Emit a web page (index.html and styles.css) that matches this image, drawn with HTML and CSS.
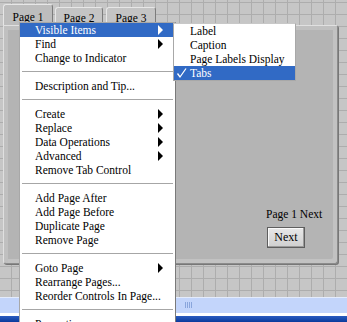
FILE: index.html
```html
<!DOCTYPE html>
<html>
<head>
<meta charset="utf-8">
<link rel="stylesheet" href="styles.css">
</head>
<body>
<div class="window">
  <div class="canvas">
    <div class="tabctl">
      <div class="tabs">
        <div class="tab tab-active">Page 1</div>
        <div class="tab">Page 2</div>
        <div class="tab tab-last">Page 3</div>
      </div>
      <div class="panel">
        <div class="pagelabel">Page 1 Next</div>
        <div class="btn">Next</div>
      </div>
    </div>
  </div>
  <div class="hscroll"><span class="grip"></span></div>
  <div class="gap"></div>
  <div class="taskbar"></div>

  <div class="menu">
    <div class="item sel">Visible Items<span class="arrow"></span></div>
    <div class="item">Find<span class="arrow"></span></div>
    <div class="item">Change to Indicator</div>
    <div class="sep"></div>
    <div class="item">Description and Tip...</div>
    <div class="sep"></div>
    <div class="item">Create<span class="arrow"></span></div>
    <div class="item">Replace<span class="arrow"></span></div>
    <div class="item">Data Operations<span class="arrow"></span></div>
    <div class="item">Advanced<span class="arrow"></span></div>
    <div class="item">Remove Tab Control</div>
    <div class="sep"></div>
    <div class="item">Add Page After</div>
    <div class="item">Add Page Before</div>
    <div class="item">Duplicate Page</div>
    <div class="item">Remove Page</div>
    <div class="sep"></div>
    <div class="item">Goto Page<span class="arrow"></span></div>
    <div class="item">Rearrange Pages...</div>
    <div class="item">Reorder Controls In Page...</div>
    <div class="sep"></div>
    <div class="item">Properties</div>
  </div>

  <div class="submenu">
    <div class="item">Label</div>
    <div class="item">Caption</div>
    <div class="item">Page Labels Display</div>
    <div class="item sel"><svg class="check" width="12" height="12" viewBox="0 0 12 12"><polyline points="1.5,6.5 4,10 10,1.5" fill="none" stroke="#fff" stroke-width="1.3"/></svg>Tabs</div>
  </div>
</div>
</body>
</html>
```
FILE: styles.css
```css
* { box-sizing: border-box; }
html, body { margin: 0; padding: 0; }
body {
  font-family: "Liberation Serif", "Times New Roman", serif;
  font-size: 11.5px;
  color: #000;
  background: #c5c5c5;
}
.window {
  position: relative;
  width: 347px;
  height: 322px;
  overflow: hidden;
  display: flex;
  flex-direction: column;
}
.canvas {
  position: relative;
  height: 297px;
  flex: none;
  background-color: #c6c6c6;
  background-image:
    linear-gradient(to right, #adadad 1px, transparent 1px),
    linear-gradient(to bottom, #adadad 1px, transparent 1px);
  background-size: 12px 12px;
  background-position: 11px 2px;
}
.tabctl {
  position: absolute;
  left: 3px;
  top: 4px;
  width: 335px;
  height: 260px;
  display: flex;
  flex-direction: column;
}
.tabs {
  display: flex;
  height: 21px;
  align-items: flex-end;
  gap: 2px;
}
.tab {
  height: 18px;
  padding: 2px 0 0;
  line-height: 16px;
  background: #c4c4c4;
  border-top: 1px solid #e6e6e6;
  border-left: 1px solid #e6e6e6;
  border-right: 1px solid #7c7c7c;
  border-radius: 3px 3px 0 0;
  width: 48px;
  text-align: center;
}
.tab-last { width: 50px; margin-left: 1px; }
.tab-active {
  height: 21px;
  width: 50px;
  padding-top: 4px;
  background: #bdbdbd;
}
.panel {
  position: relative;
  flex: 1;
  background: #b4b4b4;
  border: 1px solid #8c8c8c;
  border-top-color: #e0e0e0;
  border-left-color: #e0e0e0;
  border-radius: 0 2px 3px 3px;
  box-shadow: inset 4px 4px 0 #c0c0c0, inset -4px -4px 0 #c2c2c2, 1px 1px 0 #777;
}
.pagelabel {
  position: absolute;
  left: 262px;
  top: 182px;
  white-space: nowrap;
}
.btn {
  position: absolute;
  left: 263px;
  top: 201px;
  width: 38px;
  height: 21px;
  border: 1px solid #5e5e5e;
  background: linear-gradient(#e8e8e8, #cfcfcf);
  box-shadow: inset -1px -1px 0 #9a9a9a, inset 1px 1px 0 #fafafa;
  text-align: center;
  line-height: 18px;
  font-size: 12px;
}
.hscroll {
  position: relative;
  height: 16px;
  flex: none;
  background: #c3d5fb;
  border-top: 1px solid #e4ecfc;
}
.grip {
  position: absolute;
  left: 185px;
  top: 4px;
  width: 8px;
  height: 6px;
  background: repeating-linear-gradient(to right, #8aa6dc 0 1px, transparent 1px 2px);
}
.gap { height: 3px; flex: none; background: #fff; }
.taskbar {
  flex: 1;
  background: linear-gradient(#2a5bc0, #0a3a9c);
}
.menu {
  position: absolute;
  left: 19px;
  top: 22px;
  width: 157px;
  background: #fff;
  border: 1px solid #a8a8a8;
  border-right-color: #7a7a7a;
  padding: 0 2px 0 0;
}
.item {
  position: relative;
  height: 14px;
  line-height: 14px;
  padding-left: 15px;
  white-space: nowrap;
}
.item.sel { background: #316ac5; color: #fff; }
.arrow {
  position: absolute;
  right: 10px;
  top: 2px;
  width: 0;
  height: 0;
  border-left: 5px solid #000;
  border-top: 5px solid transparent;
  border-bottom: 5px solid transparent;
}
.sel .arrow { border-left-color: #fff; }
.sep {
  height: 14px;
  margin: 0 0 0 2px;
  background: linear-gradient(#a6a6a6, #a6a6a6) no-repeat 0 6px / 100% 1px;
}
.submenu {
  position: absolute;
  left: 173px;
  top: 23px;
  width: 123px;
  background: #fff;
  border: 1px solid #a8a8a8;
  border-top: 1px solid #c8c8c8;
}
.submenu .item { padding-left: 16px; }
.check {
  position: absolute;
  left: 2px;
  top: 1px;
}
```
